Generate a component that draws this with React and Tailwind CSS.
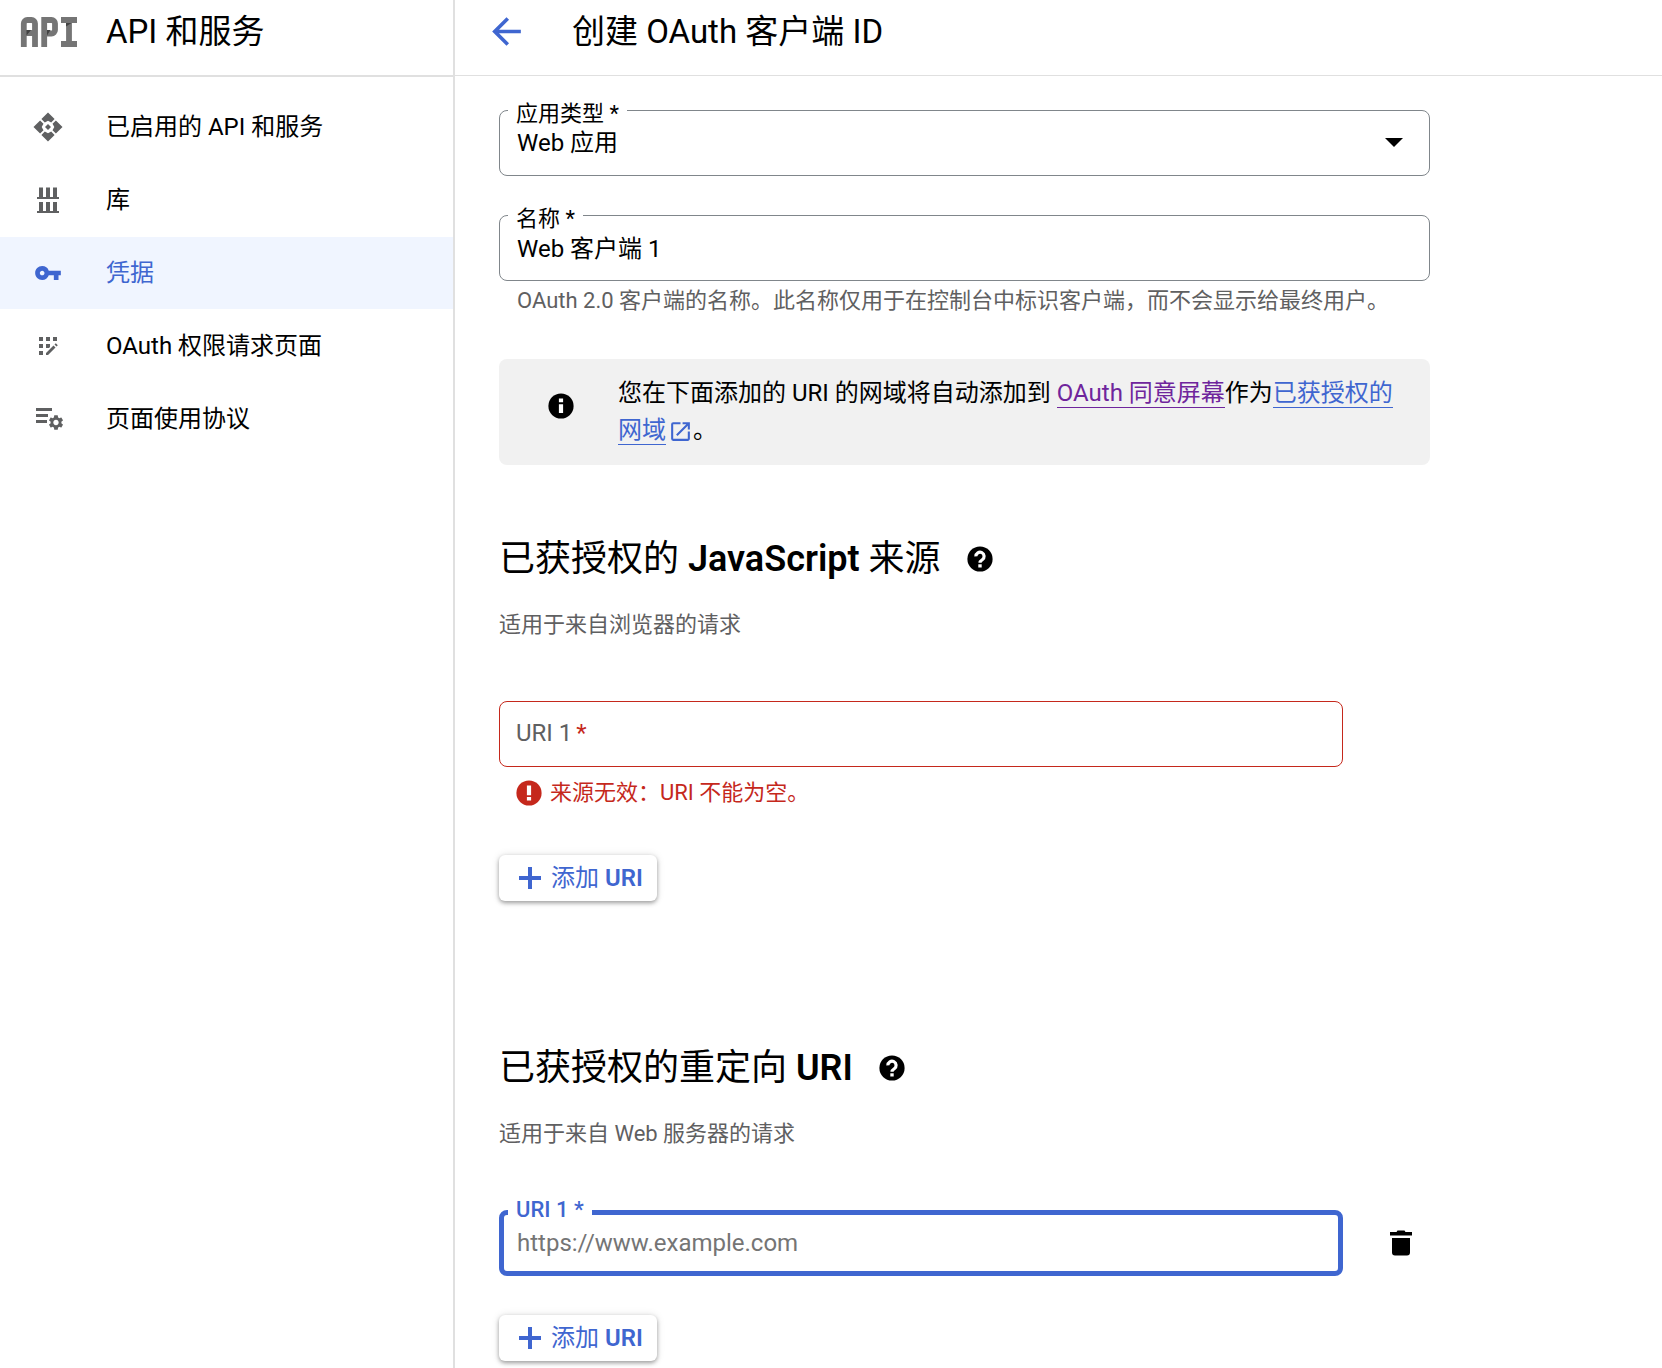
import React, { useState } from 'react'
import { MdArrowBack, MdOpenInNew, MdVpnKey } from 'react-icons/md'

const GEAR = 'M19.14 12.94c.04-.3.06-.61.06-.94 0-.32-.02-.64-.07-.94l2.03-1.58a.49.49 0 0 0 .12-.61l-1.92-3.32a.488.488 0 0 0-.59-.22l-2.39.96c-.5-.38-1.03-.7-1.62-.94l-.36-2.54a.484.484 0 0 0-.48-.41h-3.84c-.24 0-.43.17-.47.41l-.36 2.54c-.59.24-1.13.57-1.62.94l-2.39-.96c-.22-.08-.47 0-.59.22L2.74 8.87c-.12.21-.08.47.12.61l2.03 1.58c-.05.3-.09.63-.09.94s.02.64.07.94l-2.03 1.58a.49.49 0 0 0-.12.61l1.92 3.32c.12.22.37.29.59.22l2.39-.96c.5.38 1.03.7 1.62.94l.36 2.54c.05.24.24.41.48.41h3.84c.24 0 .44-.17.47-.41l.36-2.54c.59-.24 1.13-.56 1.62-.94l2.39.96c.22.08.47 0 .59-.22l1.92-3.32c.12-.22.07-.47-.12-.61l-2.01-1.58zM12 15.6c-1.98 0-3.6-1.62-3.6-3.6s1.62-3.6 3.6-3.6 3.6 1.62 3.6 3.6-1.62 3.6-3.6 3.6z'

function ApiLogo() {
  return (
    <svg width="58" height="30" viewBox="0 0 58 30" fill="none" stroke="#757575" strokeWidth="5.8" aria-hidden="true">
      <path d="M3.8 30V6.5a3.500 3.500 0 0 1 3.500-3.500h4.200a3.500 3.500 0 0 1 3.500 3.500V30M3.800 16h11" />
      <path d="M24.200 30V3h7.300a3.500 3.500 0 0 1 3.500 3.500v6.500a3.500 3.500 0 0 1-3.500 3.500h-7.300" />
      <path d="M41 3h16M41 27h16M49 3v24" />
      <path d="M6.500 13h4.500l-4.500 5.500zM27 13h3.500l-3.500 5.500zM46 5.900h5.500l-5.500 3.500z" fill="#424242" stroke="none" />
    </svg>
  )
}

function ApiIcon() {
  const wedge = 'M17 2.500L23.600 9.100 20.200 12.500 17 10.700 13.800 12.500 10.400 9.100z'
  return (
    <svg width="34" height="34" viewBox="0 0 34 34" fill="currentColor" aria-hidden="true">
      <path d={wedge} />
      <path d={wedge} transform="rotate(90 17 17)" />
      <path d={wedge} transform="rotate(180 17 17)" />
      <path d={wedge} transform="rotate(270 17 17)" />
      <path d="M17 14l3 3-3 3-3-3z" />
    </svg>
  )
}

function LibraryIcon() {
  return (
    <svg width="34" height="34" viewBox="0 0 34 34" fill="currentColor" aria-hidden="true">
      <path d="M6 14h22v2H6zM8 4.500h4V14H8zM15 4.500h4V14h-4zM22 4.500h4V14h-4z" />
      <path d="M6 28h22v2H6zM8 19h4v9H8zM15 19h4v9h-4zM22 19h4v9h-4z" />
    </svg>
  )
}

function ConsentIcon() {
  return (
    <svg width="34" height="34" viewBox="0 0 34 34" fill="currentColor" aria-hidden="true">
      <path d="M8 8h4v4H8zM15 8h4v4h-4zM22 8h4v4h-4zM8 15h4v4H8zM15 15h4v3l-1 1h-3zM8 22h4v4H8z" />
      <path d="M15 24l7.500-7.500 2 2L17 26h-2zM23.500 15.500l1.300-1.300 2 2-1.300 1.300z" />
    </svg>
  )
}

function AgreementIcon() {
  return (
    <svg width="34" height="34" viewBox="0 0 34 34" fill="currentColor" aria-hidden="true">
      <path d="M5 6h16v3H5zM5 12h12v3H5zM5 18h11v3H5z" />
      <path d={GEAR} transform="translate(16 11.500) scale(.75)" />
    </svg>
  )
}

// Filled disc with a white mark cut into it
function StatusIcon({ kind, className = '' }) {
  return (
    <svg width="30" height="30" viewBox="0 0 30 30" className={`shrink-0 ${className}`} aria-hidden="true">
      <circle cx="15" cy="15" r="12.600" fill="currentColor" />
      {kind === 'info' && <path d="M12.900 7.500h4.200v3.800h-4.200zM12.900 13.200h4.200v8.800h-4.200z" fill="#fff" />}
      {kind === 'error' && <path d="M12.900 7.500h4.200v9.800h-4.200zM12.900 19h4.200v3.500h-4.200z" fill="#fff" />}
      {kind === 'help' && (
        <>
          <path d="M10.900 12.400a4.100 4.100 0 1 1 6.400 3.300c-1.500 1-2.300 1.500-2.300 3.100" fill="none" stroke="#fff" strokeWidth="3.200" />
          <path d="M13.300 20.300h3.400v3.200h-3.400z" fill="#fff" />
        </>
      )}
    </svg>
  )
}

function TrashIcon() {
  return (
    <svg width="24" height="26" viewBox="0 0 24 26" fill="currentColor" aria-hidden="true">
      <path d="M1 2h6.500l1-1.500h7l1 1.500H23v3.500H1zM3 8h18v14.500a3 3 0 0 1-3 3H6a3 3 0 0 1-3-3z" />
    </svg>
  )
}

const NAV = [
  { label: '已启用的 API 和服务', icon: <ApiIcon /> },
  { label: '库', icon: <LibraryIcon /> },
  { label: '凭据', icon: <MdVpnKey size={28} />, active: true },
  { label: 'OAuth 权限请求页面', icon: <ConsentIcon /> },
  { label: '页面使用协议', icon: <AgreementIcon /> },
]

function FieldLabel({ htmlFor, className, children }) {
  return (
    <label htmlFor={htmlFor} className={`absolute left-[9px] bg-white px-2 text-[22px] leading-6 ${className}`}>
      {children}
    </label>
  )
}

function SectionTitle({ children }) {
  return (
    <div className="flex items-center gap-6">
      <h2 className="text-[36px] leading-[48px]">{children}</h2>
      <button type="button" aria-label="帮助"><StatusIcon kind="help" /></button>
    </div>
  )
}

function AddButton() {
  return (
    <button type="button"
      className="flex h-[46px] items-center gap-2 rounded-md bg-white pr-[14px] pl-4 text-2xl text-[#3f66d0] shadow-[0_2px_4px_rgba(0,0,0,0.35),0_0_8px_rgba(0,0,0,0.1)]">
      <svg width="28" height="28" viewBox="0 0 28 28" fill="currentColor" aria-hidden="true">
        <path d="M13 3h4v9h9v4h-9v9h-4v-9H4v-4h9z" />
      </svg>
      <span>添加 <b className="font-semibold">URI</b></span>
    </button>
  )
}

export default function App() {
  const [type, setType] = useState('web')
  const [name, setName] = useState('Web 客户端 1')
  const [origin, setOrigin] = useState('')
  const [redirect, setRedirect] = useState('')

  return (
    <div className="flex min-h-screen bg-white font-[Roboto,'Noto_Sans_CJK_SC',sans-serif] text-black">
      <aside className="w-[455px] shrink-0 border-r-2 border-[#e0e0e0]">
        <div className="flex h-[77px] items-center gap-7 border-b-2 border-[#e0e0e0] pb-3 pl-5">
          <ApiLogo />
          <span className="text-[33px] leading-10">API 和服务</span>
        </div>
        <nav className="flex flex-col gap-px pt-[14px]">
          {NAV.map(item => (
            <a key={item.label} href="#"
              className={`flex h-[72px] items-center pl-7 text-2xl ${item.active ? 'bg-[#f0f5ff] text-[#3f66d0]' : ''}`}>
              <span className={`mr-[38px] flex w-10 justify-center ${item.active ? '' : 'text-[#5f6061]'}`}>{item.icon}</span>
              {item.label}
            </a>
          ))}
        </nav>
      </aside>

      <div className="min-w-0 flex-1">
        <header className="flex h-[76px] items-center gap-11 border-b border-[#e0e0e0] pb-3 pl-[30px]">
          <button type="button" aria-label="返回" className="text-[#3f66d0]"><MdArrowBack size={43} /></button>
          <h1 className="text-[33px] leading-10">创建 OAuth 客户端 ID</h1>
        </header>

        <main className="max-w-[975px] pt-[34px] pl-11">
          <div className="relative">
            <FieldLabel htmlFor="type" className="-top-2">应用类型 *</FieldLabel>
            <select id="type" value={type} onChange={e => setType(e.target.value)}
              className="block h-[66px] w-full appearance-none rounded-lg border border-[#80868b] bg-transparent px-[17px] text-2xl">
              <option value="web">Web 应用</option>
            </select>
            <svg width="18" height="9" viewBox="0 0 18 9" className="pointer-events-none absolute top-7 right-[27px]" aria-hidden="true">
              <path d="M0 0h18L9 9z" />
            </svg>
          </div>

          <div className="relative mt-[39px]">
            <FieldLabel htmlFor="name" className="-top-2">名称 *</FieldLabel>
            <input id="name" type="text" value={name} onChange={e => setName(e.target.value)}
              className="block h-[66px] w-full rounded-lg border border-[#80868b] bg-transparent px-[17px] pb-1 text-2xl" />
          </div>
          <p className="mt-1 pl-[18px] text-[22px] leading-8 text-[#5f6061]">
            OAuth 2.0 客户端的名称。此名称仅用于在控制台中标识客户端，而不会显示给最终用户。
          </p>

          <div className="mt-[42px] flex gap-[42px] rounded-lg bg-[#f1f1f1] pt-4 pr-6 pb-4 pl-[47px]">
            <StatusIcon kind="info" className="mt-4" />
            <p className="text-2xl leading-[37px]">
              您在下面添加的 URI 的网域将自动添加到{' '}
              <a href="#" className="border-b border-[#6f259c] text-[#6f259c]">OAuth 同意屏幕</a>作为
              <a href="#" className="border-b border-[#3f66d0] text-[#3f66d0]">已获授权的网域</a>
              <MdOpenInNew size={25} className="ml-0.5 inline text-[#3f66d0]" />。
            </p>
          </div>

          <section className="pt-[70px]">
            <SectionTitle>已获授权的 <b className="font-semibold">JavaScript</b> 来源</SectionTitle>
            <p className="mt-[26px] text-[22px] leading-8 text-[#5f6061]">适用于来自浏览器的请求</p>
            <div className="relative mt-[60px] mr-[87px]">
              {!origin && (
                <label htmlFor="origin" className="pointer-events-none absolute inset-0 flex items-center gap-1 px-[17px] pb-0.5 text-2xl text-[#5f6061]">
                  URI 1 <span className="text-[#c5281c]">*</span>
                </label>
              )}
              <input id="origin" type="text" value={origin} onChange={e => setOrigin(e.target.value)}
                className="block h-[66px] w-full rounded-lg border border-[#c5281c] bg-transparent px-[17px] text-2xl" />
            </div>
            <p className="mt-[10px] flex items-center gap-[6px] pl-[15px] text-[22px] leading-8 text-[#c5281c]">
              <StatusIcon kind="error" />来源无效：URI 不能为空。
            </p>
            <div className="mt-[46px] flex"><AddButton /></div>
          </section>

          <section className="pt-[143px] pb-[7px]">
            <SectionTitle>已获授权的重定向 <b className="font-semibold">URI</b></SectionTitle>
            <p className="mt-[26px] text-[22px] leading-8 text-[#5f6061]">适用于来自 Web 服务器的请求</p>
            <div className="mt-[60px] flex items-center">
              <div className="relative min-w-0 flex-1">
                <FieldLabel htmlFor="redirect" className="-top-3 font-medium text-[#3f66d0]">URI 1 *</FieldLabel>
                <input id="redirect" type="text" placeholder="https://www.example.com" value={redirect}
                  onChange={e => setRedirect(e.target.value)}
                  className="block h-[66px] w-full rounded-lg border-[5px] border-[#3f66d0] bg-transparent px-[13px] text-2xl outline-none placeholder:text-[#757575]" />
              </div>
              <button type="button" aria-label="删除" className="mr-[17px] ml-[46px]"><TrashIcon /></button>
            </div>
            <div className="mt-[39px] flex"><AddButton /></div>
          </section>
        </main>
      </div>
    </div>
  )
}
